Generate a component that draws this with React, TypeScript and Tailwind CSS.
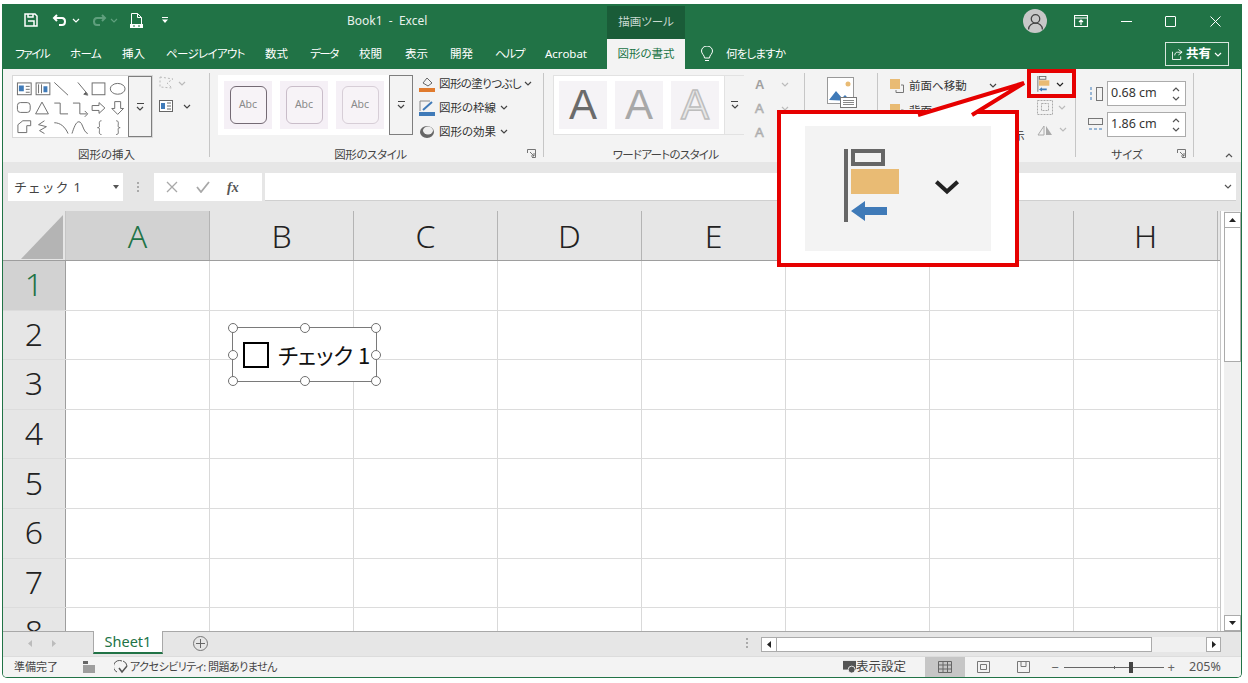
import type { ReactNode } from 'react';

const columns = ['A', 'B', 'C', 'D', 'E', 'F', 'G', 'H'];
const rows = [1, 2, 3, 4, 5, 6, 7, 8];

const tabs = [
  { label: 'ファイル', w: 'w-[34px]', t: 'tracking-[-1.4px]' },
  { label: 'ホーム', w: 'w-[31px]', t: 'tracking-[-.6px]' },
  { label: '挿入', w: 'w-[23px]', t: '' },
  { label: 'ページレイアウト', w: 'w-[78px]', t: 'tracking-[-.7px]' },
  { label: '数式', w: 'w-[24px]', t: '' },
  { label: 'データ', w: 'w-[28px]', t: 'tracking-[-1.4px]' },
  { label: '校閲', w: 'w-[25px]', t: '' },
  { label: '表示', w: 'w-[24px]', t: '' },
  { label: '開発', w: 'w-[24px]', t: '' },
  { label: 'ヘルプ', w: 'w-[29px]', t: 'tracking-[-1.2px]' },
  { label: 'Acrobat', w: 'w-[46px]', t: '' },
];

function Chevron({ className = 'text-[#666]' }: { className?: string }) {
  return (
    <svg viewBox="0 0 8 5" className={`h-[5px] w-[8px] shrink-0 ${className}`} fill="none" stroke="currentColor" strokeWidth="1.2">
      <path d="M1 1l3 3 3-3" />
    </svg>
  );
}

function MoreButton({ className }: { className: string }) {
  return (
    <div className={`flex shrink-0 flex-col items-center justify-center gap-[2px] ${className}`}>
      <div className="h-px w-[7px] bg-[#444]" />
      <Chevron className="text-[#444]" />
    </div>
  );
}

function Group({ width, label, labelClass = '', launcher, children }: { width: string; label: string; labelClass?: string; launcher?: boolean; children: ReactNode }) {
  return (
    <div className={`relative flex h-full shrink-0 flex-col ${width}`}>
      <div className="flex h-[72px] pt-[6px]">{children}</div>
      <div className={`flex flex-1 items-start justify-center pt-[7px] text-[11.500px] leading-[14px] text-[#444] ${labelClass}`}>{label}</div>
      {launcher && (
        <svg viewBox="0 0 9 9" className="absolute bottom-[4px] right-[8px] h-[9px] w-[9px] text-[#666]" fill="none" stroke="currentColor">
          <path d="M.5 4V.5H8.5V8.5H5M3 3l4 4M4 7h3V4" strokeWidth=".9" />
        </svg>
      )}
      <div className="absolute bottom-[5px] right-0 top-[4px] w-px bg-[#c6c6c6]" />
    </div>
  );
}

function ShapesIcon() {
  return (
    <svg viewBox="12 75 117 63" className="h-[63px] w-[117px]" fill="none" stroke="#6e6e6e" strokeWidth="1">
      <rect x="16.5" y="81.5" width="14" height="12" fill="#fff" />
      <path d="M18 84h5v6h-5z" fill="#3f7ab8" stroke="none" />
      <path d="M25 85h4M25 88h4M25 91h4" />
      <rect x="35.5" y="81.5" width="14" height="12" />
      <path d="M38 83v9M41 83v9" />
      <path d="M43 85h4v6h-4z" fill="#3f7ab8" stroke="none" />
      <path d="M54 81l14 13M78 81l10 12" />
      <path d="M88 94l-4-1 2-2z" fill="#555" />
      <rect x="92.5" y="81.5" width="13" height="12" />
      <ellipse cx="118.500" cy="87.500" rx="7.500" ry="5.500" />
      <rect x="16.500" y="101.500" width="13" height="10" rx="3" />
      <path d="M35 113l6.500-12 6.500 12z" />
      <path d="M54 102h6v11h8M73 102h7v11h7M85 110l3 3-3 3" />
      <path d="M92.500 104.500h7v-3l6 5.500-6 5.500v-3h-7z" />
      <path d="M115.500 100.500h6v7h3l-6 6-6-6h3z" />
      <path d="M17 132v-8l5-4h8v5h-4v7z" />
      <path d="M44 120l-6 4 8 2-7 4 5 3" />
      <path d="M54 122c6 0 11 4 14 11M72 133c2-6 4-12 7-12 4 0 4 10 9 12" />
      <path d="M102 120c-3 0-2 3-2 5s-1 2-2 2c1 0 2 0 2 2s-1 5 2 5M117 120c3 0 2 3 2 5s1 2 2 2c-1 0-2 0-2 2s1 5-2 5" />
    </svg>
  );
}

function StyleSwatch({ border }: { border: string }) {
  return (
    <div className="flex h-[48px] w-[48px] shrink-0 items-center justify-center bg-[#f5f0f6]">
      <div className={`flex h-[38px] w-[37px] items-center justify-center rounded-[6px] border bg-[#f7f3f7] text-[10.5px] text-[#8a8a8a] ${border}`}>
        Abc
      </div>
    </div>
  );
}

function AlignIcon({ className }: { className: string }) {
  return (
    <svg viewBox="0 0 56 74" className={className}>
      <rect x="0" y="0" width="4" height="73" fill="#666" />
      <rect x="9" y="2" width="30" height="13" fill="none" stroke="#666" strokeWidth="4" />
      <rect x="7" y="20" width="48" height="25" fill="#e9bb74" />
      <path d="M7 62l14-10v6h22v8H21v6z" fill="#3f7ab8" />
    </svg>
  );
}

function Handle({ className }: { className: string }) {
  return <div className={`absolute h-[10px] w-[10px] rounded-full border-[1.500px] border-[#707070] bg-white ${className}`} />;
}

function SizeInput({ value }: { value: string }) {
  return (
    <div className="flex h-[25px] w-[79px] items-center justify-between border border-[#ababab] bg-white pl-[3px] pr-[5px] text-[12.500px] text-[#333]">
      <span>{value}</span>
      <div className="flex flex-col gap-[4px]">
        <Chevron className="rotate-180 text-[#555]" />
        <Chevron className="text-[#555]" />
      </div>
    </div>
  );
}

export default function App() {
  return (
    <div className="h-[683px] w-[1248px] overflow-hidden bg-white pl-[2px] pt-[4px] font-['Noto_Sans','Noto_Sans_CJK_JP',sans-serif] text-[11.500px] text-[#333] [font-feature-settings:'palt']">
      <div className="relative flex h-[674px] w-[1240px] flex-col overflow-hidden rounded-b-[5px] border-x border-b border-[#217346]">
        {/* title bar */}
        <div className="flex h-[35px] shrink-0 items-start bg-[#217346] text-white">
          <div className="flex h-[35px] w-[344px] shrink-0 items-center pb-[3px] pl-[21px]">
            <svg viewBox="0 0 14 14" className="h-[14px] w-[14px]" fill="none" stroke="#fff" strokeWidth="1.500">
              <path d="M1 1h10l2 2v10H1zM4 8h6v5M4 1v3h5V1" />
            </svg>
            <svg viewBox="0 0 16 12" className="ml-[14px] h-[12px] w-[16px]" fill="none" stroke="#fff" strokeWidth="2">
              <path d="M5 1L2 4l3 3M2 4h8c4 0 4 7 0 7H7" />
            </svg>
            <Chevron className="ml-[4px] text-white" />
            <svg viewBox="0 0 16 12" className="ml-[11px] h-[12px] w-[16px]" fill="none" stroke="#5f9f7d" strokeWidth="2">
              <path d="M11 1l3 3-3 3M14 4H6c-4 0-4 7 0 7h3" />
            </svg>
            <Chevron className="ml-[3px] text-[#5f9f7d]" />
            <svg viewBox="0 0 13 15" className="ml-[12px] h-[15px] w-[13px]" fill="none" stroke="#fff">
              <path d="M1.500 11V.5h6l4 4V11M7.500.5v4h4" />
              <rect x="0" y="11" width="13" height="4" fill="#fff" stroke="none" />
              <path d="M3 13h2M8 13h2" stroke="#217346" />
            </svg>
            <svg viewBox="0 0 6 6" className="ml-[19px] h-[6px] w-[6px]" fill="#fff">
              <path d="M0 0h6v1H0zM0 2.500h6L3 6z" />
            </svg>
          </div>
          <div className="flex h-[35px] w-[260px] shrink-0 items-center pb-[1px] text-[12px] text-[#e8f1ec]">Book1&nbsp; -&nbsp; Excel</div>
          <div className="mt-[2px] flex h-[33px] w-[78px] shrink-0 items-center justify-center bg-[#1a5c38] pb-[1px] text-[11.500px] text-[#c9d9d0]">
            描画ツール
          </div>
          <div className="flex h-[35px] flex-1 items-center pb-[1px]">
            <div className="ml-[338px] flex h-[24px] w-[24px] items-center justify-center rounded-full bg-[#c8c8c8]">
              <svg viewBox="0 0 16 16" className="h-[17px] w-[17px]" fill="none" stroke="#444" strokeWidth="1.200">
                <circle cx="8" cy="5.500" r="4" />
                <path d="M1.500 15.500c0-8 13-8 13 0" />
              </svg>
            </div>
            <svg viewBox="0 0 14 12" className="ml-[27px] h-[12px] w-[14px]" fill="none" stroke="#fff" strokeWidth="1.200">
              <path d="M.5.5h13v11H.5zM.5 3h13M7 10V5M5 7l2-2 2 2" />
            </svg>
            <div className="ml-[33px] h-[1px] w-[11px] bg-white" />
            <div className="ml-[33px] h-[11px] w-[11px] rounded-[1px] border border-white" />
            <svg viewBox="0 0 11 11" className="ml-[34px] h-[11px] w-[11px]" fill="none" stroke="#fff">
              <path d="M.5.5l10 10M10.500.5l-10 10" />
            </svg>
          </div>
        </div>

        {/* ribbon tabs */}
        <div className="flex h-[30px] shrink-0 items-stretch bg-[#217346] pl-[12px] text-[11.500px] text-white">
          <div className="flex items-center gap-[21px] pb-[1px]">
            {tabs.map((tab) => (
              <span key={tab.label} className={`whitespace-nowrap ${tab.w} ${tab.t}`}>
                {tab.label}
              </span>
            ))}
          </div>
          <div className="ml-[16px] flex w-[78px] items-center justify-center bg-[#f3f3f3] pb-[1px] text-[#217346]">図形の書式</div>
          <svg viewBox="0 0 12 16" className="ml-[16px] mt-[7px] h-[16px] w-[12px]" fill="none" stroke="#fff">
            <path d="M3.500 12c0-3-3-4-3-7a5.500 5 0 0 1 11 0c0 3-3 4-3 7zM4 14.500h4" />
          </svg>
          <span className="ml-[13px] flex items-center pb-[1px] tracking-[-.8px]">何をしますか</span>
          <div className="ml-auto mr-[12px] mt-[3px] flex h-[24px] w-[64px] items-center justify-center gap-[3px] border border-[#d8e6de] text-[12.500px] font-bold">
            <svg viewBox="0 0 12 12" className="h-[11px] w-[11px]" fill="none" stroke="#fff">
              <path d="M7 .5l4 3-4 3M11 3.500H6C4 3.500 3 5 3 7M.5 3v8.500h9V8" />
            </svg>
            <span>共有</span>
            <Chevron className="text-white" />
          </div>
        </div>

        {/* ribbon */}
        <div className="flex h-[93px] shrink-0 bg-[#f3f3f3]">
          <Group width="w-[207px]" label="図形の挿入">
            <div className="ml-[9px] flex h-[63px] w-[141px] border border-[#d8d8d8] bg-white">
              <ShapesIcon />
              <MoreButton className="w-[24px] border border-[#7e7e7e] bg-[#f3f3f3]" />
            </div>
            <div className="ml-[6px] flex flex-col gap-[10px] pt-[1px]">
              <div className="flex items-center gap-[3px] opacity-40">
                <svg viewBox="0 0 16 14" className="h-[14px] w-[16px]" fill="none" stroke="#666" strokeDasharray="2 2">
                  <path d="M1 1l13 2-6 4 5 5-12-1z" />
                </svg>
                <Chevron />
              </div>
              <div className="flex items-center gap-[10px]">
                <svg viewBox="0 0 14 12" className="h-[12px] w-[14px]" fill="none" stroke="#666">
                  <rect x=".5" y=".5" width="13" height="11" fill="#fff" />
                  <path d="M2 3h4v6H2z" fill="#3f7ab8" stroke="none" />
                  <path d="M8 3h4M8 6h4M8 9h4" />
                </svg>
                <Chevron className="text-[#444]" />
              </div>
            </div>
          </Group>

          <Group width="w-[334px]" label="図形のスタイル" labelClass="pr-[13px] tracking-[-.4px]" launcher>
            <div className="ml-[8px] flex h-[60px] w-[195px] bg-white pl-[6px] pt-[6px]">
              <div className="flex gap-[8px]">
                <StyleSwatch border="border-[#746a74]" />
                <StyleSwatch border="border-[#c9bdc9]" />
                <StyleSwatch border="border-[#d7ced7]" />
              </div>
              <MoreButton className="-mt-[6px] ml-[5px] h-[60px] w-[24px] border border-[#7e7e7e] bg-[#f3f3f3]" />
            </div>
            <div className="ml-[6px] flex flex-col gap-[7px] text-[11.500px] leading-[17px] text-[#333]">
              <div className="flex items-center gap-[4px]">
                <svg viewBox="0 0 16 16" className="h-[16px] w-[16px]" fill="none" stroke="#666">
                  <path d="M4 7l4-5 5 5-4 3z" />
                  <rect x="0" y="12" width="16" height="4" fill="#e07b2e" stroke="none" />
                </svg>
                <span className="whitespace-nowrap tracking-[-.6px]">図形の塗りつぶし</span>
                <Chevron className="-ml-[1px] text-[#444]" />
              </div>
              <div className="flex items-center gap-[4px]">
                <svg viewBox="0 0 16 16" className="h-[16px] w-[16px]" fill="none">
                  <path d="M1 1h10M1 1v10" stroke="#888" />
                  <path d="M4 10l9-8" stroke="#3f7ab8" strokeWidth="2" />
                  <rect x="0" y="12" width="16" height="4" fill="#3f7ab8" />
                </svg>
                <span className="whitespace-nowrap">図形の枠線</span>
                <Chevron className="text-[#444]" />
              </div>
              <div className="flex items-center gap-[4px]">
                <svg viewBox="0 0 16 16" className="h-[16px] w-[16px]">
                  <ellipse cx="8" cy="8" rx="7" ry="6" fill="#666" />
                  <ellipse cx="9" cy="6.500" rx="5" ry="4" fill="#eee" />
                </svg>
                <span className="whitespace-nowrap">図形の効果</span>
                <Chevron className="text-[#444]" />
              </div>
            </div>
          </Group>

          <Group width="w-[261px]" label="ワードアートのスタイル" labelClass="pr-[18px] tracking-[-.7px]">
            <div className="ml-[9px] flex h-[60px] w-[191px] border border-[#e2e2e2] bg-white pl-[5px] pt-[5px] font-['Liberation_Sans',sans-serif]">
              <div className="flex gap-[8px] text-[42px] leading-[48px]">
                <div className="flex h-[48px] w-[48px] items-center justify-center bg-[#f5f3f6] text-[#6b6b6b]">A</div>
                <div className="flex h-[48px] w-[48px] items-center justify-center bg-[#f5f3f6] text-[#a8a8a8]">A</div>
                <div className="flex h-[48px] w-[48px] items-center justify-center bg-[#f5f3f6] text-[#e8e8e8] [-webkit-text-stroke:1.500px_#bdbdbd]">A</div>
              </div>
              <MoreButton className="-mt-[5px] ml-[5px] h-[58px] w-[20px] border-l border-[#e2e2e2] bg-[#f3f3f3]" />
            </div>
            <div className="ml-[11px] flex w-[34px] flex-col gap-[5px] font-['Liberation_Sans',sans-serif] text-[13px] leading-[19px]">
              <div className="flex items-center justify-between font-bold text-[#a0a0a0]">
                A <Chevron className="text-[#bbb]" />
              </div>
              <div className="flex items-center justify-between text-[#e8e8e8] [-webkit-text-stroke:.7px_#aaa]">
                A <Chevron className="text-[#bbb]" />
              </div>
              <div className="text-[#e8e8e8] [-webkit-text-stroke:.7px_#aaa]">A</div>
            </div>
          </Group>

          <Group width="w-[73px]" label="">
            <svg viewBox="0 0 30 31" className="ml-[22px] mt-[2px] h-[31px] w-[30px]">
              <rect x=".5" y=".5" width="26" height="26" fill="#fff" stroke="#999" />
              <circle cx="21" cy="7" r="2.500" fill="#e9bb74" />
              <path d="M2 23l7-9 6 7 3-3 6 6z" fill="#3f7ab8" />
              <rect x="13.500" y="20.500" width="16" height="10" fill="#fff" stroke="#777" />
              <path d="M16 23.500h11M16 25.500h11M16 27.500h11" stroke="#888" />
            </svg>
          </Group>

          <Group width="w-[198px]" label="">
            <div className="ml-[12px] flex w-[125px] flex-col gap-[6px] pt-[1px] text-[11.500px] leading-[19px]">
              <div className="flex items-center gap-[5px]">
                <svg viewBox="0 0 14 14" className="h-[14px] w-[14px]">
                  <rect width="10" height="10" fill="#e9bb74" />
                  <path d="M11 6h2.500v7.500H6V11" fill="none" stroke="#777" />
                </svg>
                <span className="w-[60px] whitespace-nowrap">前面へ移動</span>
                <Chevron className="ml-[15px] text-[#444]" />
              </div>
              <div className="flex items-center gap-[5px]">
                <svg viewBox="0 0 14 14" className="h-[14px] w-[14px]">
                  <rect width="10" height="10" fill="#e9bb74" />
                  <path d="M11 6h2.500v7.500H6V11" fill="none" stroke="#777" />
                </svg>
                <span className="whitespace-nowrap">背面へ移動</span>
              </div>
              <div className="whitespace-nowrap pl-[7px]">オブジェクトの選択と表示</div>
            </div>
            <div className="ml-[22px] flex flex-col gap-[8px] pt-[1px]">
              <div className="flex items-center gap-[6px]">
                <AlignIcon className="h-[16px] w-[13px]" />
                <Chevron className="text-[#222]" />
              </div>
              <div className="flex items-center gap-[5px]">
                <svg viewBox="0 0 16 15" className="h-[15px] w-[16px]" fill="none" stroke="#aaa" strokeDasharray="2 1">
                  <rect x=".5" y=".5" width="15" height="14" />
                  <rect x="4.500" y="3.500" width="7" height="7" />
                </svg>
                <Chevron className="text-[#bbb]" />
              </div>
              <div className="flex items-center gap-[5px]">
                <svg viewBox="0 0 17 13" className="h-[13px] w-[17px]">
                  <path d="M1 12l6-9v9z" fill="none" stroke="#aaa" />
                  <path d="M9 3l6 9H9z" fill="#aaa" />
                </svg>
                <Chevron className="text-[#bbb]" />
              </div>
            </div>
          </Group>

          <Group width="w-[118px]" label="サイズ" labelClass="pr-[16px]" launcher>
            <div className="flex flex-col gap-[6px] pl-[12px] pt-[6px]">
              <div className="flex items-center gap-[4px]">
                <svg viewBox="0 0 15 16" className="h-[16px] w-[15px]" fill="none" stroke="#777">
                  <path d="M3 1v14" stroke="#3f7ab8" strokeDasharray="3 2" />
                  <rect x="8.500" y="1.500" width="6" height="13" />
                </svg>
                <SizeInput value="0.68 cm" />
              </div>
              <div className="flex items-center gap-[4px]">
                <svg viewBox="0 0 15 16" className="h-[16px] w-[15px]" fill="none" stroke="#777">
                  <rect x=".5" y="1.500" width="14" height="6" />
                  <path d="M1 12h13" stroke="#3f7ab8" strokeDasharray="3 2" />
                </svg>
                <SizeInput value="1.86 cm" />
              </div>
            </div>
          </Group>

          <div className="flex flex-1 items-end justify-end pb-[4px] pr-[8px]">
            <Chevron className="rotate-180 text-[#555]" />
          </div>
        </div>

        {/* formula bar */}
        <div className="flex h-[40px] shrink-0 items-end bg-[#e6e6e6] pb-[1px] pl-[5px] pr-[5px]">
          <div className="flex h-[28px] w-[115px] shrink-0 items-center justify-between bg-white pl-[6px] pr-[4px] text-[13px] text-[#444]">
            <span className="pt-[1px] tracking-[.8px] [font-feature-settings:normal]">チェック 1</span>
            <svg viewBox="0 0 6 4" className="h-[4px] w-[6px]" fill="#555">
              <path d="M0 0h6L3 4z" />
            </svg>
          </div>
          <div className="ml-[14px] flex h-[28px] flex-col justify-center gap-[2px]">
            <div className="h-[2px] w-[2px] bg-[#aaa]" />
            <div className="h-[2px] w-[2px] bg-[#aaa]" />
            <div className="h-[2px] w-[2px] bg-[#aaa]" />
          </div>
          <div className="ml-[15px] flex h-[28px] w-[108px] shrink-0 items-center bg-white pl-[12px]">
            <svg viewBox="0 0 12 12" className="h-[12px] w-[12px]" fill="none" stroke="#a8a8a8" strokeWidth="1.300">
              <path d="M1 1l10 10M11 1L1 11" />
            </svg>
            <svg viewBox="0 0 14 12" className="ml-[18px] h-[12px] w-[14px]" fill="none" stroke="#a8a8a8" strokeWidth="1.800">
              <path d="M1 6l4 5 8-10" />
            </svg>
            <span className="ml-[17px] font-['Liberation_Serif',serif] text-[14px] font-bold italic text-[#555]">fx</span>
          </div>
          <div className="ml-[3px] flex h-[28px] flex-1 items-center justify-end border-b border-[#d0d0d0] bg-white pr-[4px]">
            <Chevron className="text-[#555]" />
          </div>
        </div>

        {/* sheet */}
        <div className="h-[9px] shrink-0 bg-[#e6e6e6]" />
        <div className="flex h-[420px] shrink-0 bg-white">
          <div className="relative h-full w-[1218px] shrink-0 overflow-hidden border-r border-[#c6c6c6] font-['Noto_Sans',sans-serif] text-[32px] font-light">
            <div className="flex h-[50px] border-b border-[#9e9e9e] bg-[#e6e6e6]">
              <div className="flex w-[63px] shrink-0 items-end justify-end border-r border-[#c6c6c6] pb-[1px] pr-[2px]">
                <svg viewBox="0 0 42 44" className="h-[44px] w-[42px]">
                  <path d="M42 0v44H0z" fill="#b4b4b4" />
                </svg>
              </div>
              {columns.map((col) => (
                <div
                  key={col}
                  className={`flex w-[144px] shrink-0 items-center justify-center border-r border-[#b4b4b4] ${col === 'A' ? 'bg-[#d2d2d2] text-[#217346]' : 'text-[#222]'}`}
                >
                  {col}
                </div>
              ))}
            </div>
            {rows.map((row) => (
              <div key={row} className="flex h-[49.600px] border-b border-[#dcdcdc]">
                <div
                  className={`flex w-[63px] shrink-0 items-center justify-center border-r border-[#9e9e9e] pb-[2px] ${row === 1 ? 'bg-[#d2d2d2] text-[#217346]' : 'bg-[#e6e6e6] text-[#222]'}`}
                >
                  {row}
                </div>
                {columns.map((col) => (
                  <div key={col} className="w-[144px] shrink-0 border-r border-[#d9d9d9]" />
                ))}
              </div>
            ))}

            {/* checkbox form control */}
            <div className="absolute left-[229px] top-[116px] flex h-[55px] w-[145px] items-center border border-[#7a7a7a] bg-white pl-[10px] font-['Noto_Sans_CJK_JP',sans-serif] text-[22px] font-normal text-[#111]">
              <div className="h-[26px] w-[26px] shrink-0 border-[2.500px] border-black" />
              <span className="ml-[9px] whitespace-nowrap">チェック 1</span>
              <Handle className="-left-[5px] -top-[5px]" />
              <Handle className="left-[67px] -top-[5px]" />
              <Handle className="-right-[5px] -top-[5px]" />
              <Handle className="-left-[5px] top-[22px]" />
              <Handle className="-right-[5px] top-[22px]" />
              <Handle className="-left-[5px] -bottom-[5px]" />
              <Handle className="left-[67px] -bottom-[5px]" />
              <Handle className="-right-[5px] -bottom-[5px]" />
            </div>
          </div>
          <div className="ml-[3px] flex h-full w-[17px] shrink-0 flex-col bg-[#f0f0f0] pt-px">
            <div className="flex h-[16px] shrink-0 items-center justify-center border border-[#ababab] bg-white">
              <svg viewBox="0 0 7 4" className="h-[4px] w-[7px]" fill="#222">
                <path d="M0 4h7L3.500 0z" />
              </svg>
            </div>
            <div className="h-[134px] shrink-0 border-x border-b border-[#ababab] bg-white" />
            <div className="mt-auto flex h-[16px] shrink-0 items-center justify-center border border-[#ababab] bg-white">
              <svg viewBox="0 0 7 4" className="h-[4px] w-[7px]" fill="#222">
                <path d="M0 0h7L3.500 4z" />
              </svg>
            </div>
          </div>
        </div>

        {/* sheet tabs */}
        <div className="flex h-[25px] shrink-0 items-start border-t border-[#a8a8a8] bg-[#e6e6e6]">
          <div className="flex h-[22px] w-[90px] shrink-0 items-center gap-[20px] pl-[25px]">
            <svg viewBox="0 0 4 7" className="h-[7px] w-[4px]" fill="#bcbcbc">
              <path d="M4 0v7L0 3.500z" />
            </svg>
            <svg viewBox="0 0 4 7" className="h-[7px] w-[4px]" fill="#bcbcbc">
              <path d="M0 0v7l4-3.500z" />
            </svg>
          </div>
          <div className="-mt-px flex h-[23px] w-[70px] shrink-0 items-center justify-center border-x border-b-2 border-x-[#a8a8a8] border-b-[#217346] bg-white text-[14.500px] text-[#217346]">
            Sheet1
          </div>
          <div className="ml-[30px] mt-[4px] flex h-[15px] w-[15px] shrink-0 items-center justify-center rounded-full border border-[#777] text-[#666]">
            <svg viewBox="0 0 9 9" className="h-[9px] w-[9px]" stroke="currentColor">
              <path d="M4.500 0v9M0 4.500h9" />
            </svg>
          </div>
          <div className="ml-[538px] mt-[6px] flex flex-col gap-[2px]">
            <div className="h-[2px] w-[2px] bg-[#aaa]" />
            <div className="h-[2px] w-[2px] bg-[#aaa]" />
            <div className="h-[2px] w-[2px] bg-[#aaa]" />
          </div>
          <div className="ml-[13px] mt-[5px] flex h-[15px] w-[460px] shrink-0 bg-[#f0f0f0]">
            <div className="flex w-[16px] shrink-0 items-center justify-center border border-[#ababab] bg-white">
              <svg viewBox="0 0 4 7" className="h-[7px] w-[4px]" fill="#222">
                <path d="M4 0v7L0 3.500z" />
              </svg>
            </div>
            <div className="w-[375px] shrink-0 border-y border-r border-[#ababab] bg-white" />
            <div className="ml-auto flex w-[15px] shrink-0 items-center justify-center border border-[#ababab] bg-white">
              <svg viewBox="0 0 4 7" className="h-[7px] w-[4px]" fill="#222">
                <path d="M0 0v7l4-3.500z" />
              </svg>
            </div>
          </div>
        </div>

        {/* status bar */}
        <div className="flex h-[21px] shrink-0 items-center overflow-hidden border-t border-[#dcdcdc] bg-[#f3f3f3] pl-[11px] pr-[16px] text-[11px] text-[#444]">
          <span className="w-[44px] whitespace-nowrap">準備完了</span>
          <svg viewBox="0 0 12 12" className="ml-[25px] h-[12px] w-[12px]" fill="#666">
            <rect width="5" height="3" />
            <rect y="4" width="12" height="8" opacity=".6" />
          </svg>
          <svg viewBox="0 0 14 14" className="ml-[19px] h-[14px] w-[14px]" fill="none" stroke="#555">
            <path d="M3 12A6 6 0 0 1 8 1M9 1a6 6 0 0 1 4 5" />
            <path d="M5 8l3 4 5-6" strokeWidth="1.500" />
          </svg>
          <span className="ml-[2px] whitespace-nowrap tracking-[-.5px]">アクセシビリティ: 問題ありません</span>
          <svg viewBox="0 0 15 14" className="ml-auto h-[14px] w-[13px]" fill="#555">
            <rect width="15" height="10" />
            <circle cx="10" cy="10" r="4" stroke="#f3f3f3" />
          </svg>
          <span className="whitespace-nowrap text-[12.500px]">表示設定</span>
          <div className="ml-[19px] flex h-full w-[40px] items-center justify-center bg-[#c6c6c6]">
            <svg viewBox="0 0 14 12" className="h-[12px] w-[14px]" fill="none" stroke="#666">
              <path d="M.5.500h13v11H.5zM5 .500v11M9.500.500v11M.5 4h13M.5 8h13" />
            </svg>
          </div>
          <svg viewBox="0 0 13 12" className="ml-[12px] h-[12px] w-[13px]" fill="none" stroke="#777">
            <path d="M.5.500h12v11H.5zM3.500 3.500h6v5h-6z" />
          </svg>
          <svg viewBox="0 0 13 12" className="ml-[27px] h-[12px] w-[13px]" fill="none" stroke="#777">
            <path d="M.5.500h12v11H.5zM4 .500v5h5v-5" />
          </svg>
          <span className="ml-[21px] text-[13px] leading-none text-[#666]">−</span>
          <div className="relative ml-[5px] h-px w-[100px] bg-[#666]">
            <div className="absolute left-[50px] -top-[1px] h-[3px] w-px bg-[#666]" />
            <div className="absolute left-[65px] -top-[5px] h-[11px] w-[4px] bg-[#444]" />
          </div>
          <span className="ml-[4px] text-[13px] leading-none text-[#666]">+</span>
          <span className="ml-[14px] w-[36px] text-[12.500px] text-[#555]">205%</span>
        </div>

        {/* zoomed callout */}
        <div className="absolute left-[774px] top-[106px] flex h-[157px] w-[242px] items-center justify-center border-[4px] border-[#e60000] bg-white">
          <div className="flex h-[125px] w-[186px] items-center bg-[#f3f3f3] pb-[5px] pl-[39px]">
            <AlignIcon className="h-[74px] w-[56px]" />
            <svg viewBox="0 0 30 18" className="ml-[33px] mt-[2px] h-[16px] w-[28px]" fill="none" stroke="#222" strokeWidth="4.500">
              <path d="M3 3l12 11L27 3" />
            </svg>
          </div>
        </div>
        <svg viewBox="0 0 120 40" className="absolute left-[908px] top-[75px] h-[40px] w-[120px]" fill="#fff" stroke="#e60000" strokeWidth="4">
          <path d="M7 36L113 4 61 36" />
        </svg>
        <div className="absolute left-[1024px] top-[65px] h-[29px] w-[49px] border-[4px] border-[#e60000]" />
      </div>
    </div>
  );
}
